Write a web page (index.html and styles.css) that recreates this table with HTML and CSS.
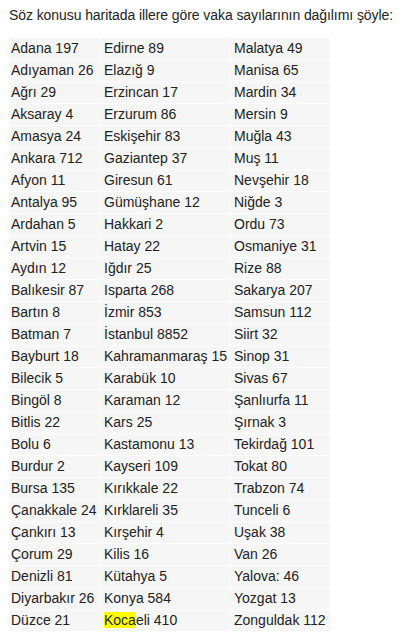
FILE: index.html
```html
<!DOCTYPE html>
<html lang="tr">
<head>
<meta charset="utf-8">
<title>Vaka sayıları</title>
<link rel="stylesheet" href="styles.css">
</head>
<body>
<p class="intro">Söz konusu haritada illere göre vaka sayılarının dağılımı şöyle:</p>
<table class="cases">
<colgroup><col class="c1"><col class="c2"><col class="c3"></colgroup>
<tbody>
<tr><td>Adana 197</td><td>Edirne 89</td><td>Malatya 49</td></tr>
<tr><td>Adıyaman 26</td><td>Elazığ 9</td><td>Manisa 65</td></tr>
<tr><td>Ağrı 29</td><td>Erzincan 17</td><td>Mardin 34</td></tr>
<tr><td>Aksaray 4</td><td>Erzurum 86</td><td>Mersin 9</td></tr>
<tr><td>Amasya 24</td><td>Eskişehir 83</td><td>Muğla 43</td></tr>
<tr><td>Ankara 712</td><td>Gaziantep 37</td><td>Muş 11</td></tr>
<tr><td>Afyon 11</td><td>Giresun 61</td><td>Nevşehir 18</td></tr>
<tr><td>Antalya 95</td><td>Gümüşhane 12</td><td>Niğde 3</td></tr>
<tr><td>Ardahan 5</td><td>Hakkari 2</td><td>Ordu 73</td></tr>
<tr><td>Artvin 15</td><td>Hatay 22</td><td>Osmaniye 31</td></tr>
<tr><td>Aydın 12</td><td>Iğdır 25</td><td>Rize 88</td></tr>
<tr><td>Balıkesir 87</td><td>Isparta 268</td><td>Sakarya 207</td></tr>
<tr><td>Bartın 8</td><td>İzmir 853</td><td>Samsun 112</td></tr>
<tr><td>Batman 7</td><td>İstanbul 8852</td><td>Siirt 32</td></tr>
<tr><td>Bayburt 18</td><td>Kahramanmaraş 15</td><td>Sinop 31</td></tr>
<tr><td>Bilecik 5</td><td>Karabük 10</td><td>Sivas 67</td></tr>
<tr><td>Bingöl 8</td><td>Karaman 12</td><td>Şanlıurfa 11</td></tr>
<tr><td>Bitlis 22</td><td>Kars 25</td><td>Şırnak 3</td></tr>
<tr><td>Bolu 6</td><td>Kastamonu 13</td><td>Tekirdağ 101</td></tr>
<tr><td>Burdur 2</td><td>Kayseri 109</td><td>Tokat 80</td></tr>
<tr><td>Bursa 135</td><td>Kırıkkale 22</td><td>Trabzon 74</td></tr>
<tr><td>Çanakkale 24</td><td>Kırklareli 35</td><td>Tunceli 6</td></tr>
<tr><td>Çankırı 13</td><td>Kırşehir 4</td><td>Uşak 38</td></tr>
<tr><td>Çorum 29</td><td>Kilis 16</td><td>Van 26</td></tr>
<tr><td>Denizli 81</td><td>Kütahya 5</td><td>Yalova: 46</td></tr>
<tr><td>Diyarbakır 26</td><td>Konya 584</td><td>Yozgat 13</td></tr>
<tr><td>Düzce 21</td><td><mark class="hl">Koca</mark>eli 410</td><td>Zonguldak 112</td></tr>
</tbody>
</table>
</body>
</html>
```

FILE: styles.css
```css
html, body {
  background: #ffffff;
}
body {
  margin: 0;
  padding: 6px 8px 0 8px;
  font-family: "Liberation Sans", Arial, sans-serif;
  color: #222222;
}
.intro {
  margin: 0 0 13px 1px;
  font-size: 14px;
  line-height: 18px;
  letter-spacing: -0.08px;
  white-space: nowrap;
}
.cases {
  border-collapse: separate;
  border-spacing: 1px;
  table-layout: fixed;
  width: 322px;
  font-size: 14px;
}
.cases .c1 { width: 90px; }
.cases .c2 { width: 129px; }
.cases .c3 { width: 100px; }
.cases td {
  background: #f6f6f6;
  padding: 2px 0 2px 4px;
  line-height: 17px;
  height: 17px;
  white-space: nowrap;
  overflow: hidden;
}
.cases td:first-child {
  padding-left: 2px;
}
.hl {
  background: #ffff00;
  color: inherit;
}
```
